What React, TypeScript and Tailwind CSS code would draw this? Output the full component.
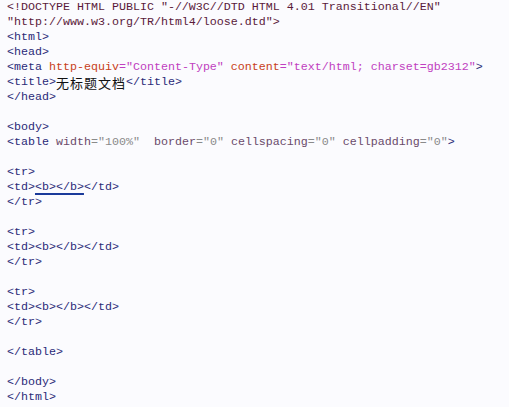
import React from 'react';

// colours picked off the editor screenshot
const TAG = 'text-[#2a2a78]';
const DOC = 'text-[#5a1a3a]';
const ATTR = 'text-[#c8401a]';
const VAL = 'text-[#c040c0]';
const TATTR = 'text-[#6a4a6a]';
const TVAL = 'text-[#8a8a8a]';

const Tag = ({ children }: { children: React.ReactNode }) => <span className={TAG}>{children}</span>;

const TrBlock = ({ underline = false }: { underline?: boolean }) => (
  <>
    <div><Tag>&lt;tr&gt;</Tag></div>
    <div>
      <Tag>&lt;td&gt;</Tag>
      <span className={`${TAG} ${underline ? 'underline decoration-2 decoration-[#1a3a9a] underline-offset-[3px]' : ''}`}>&lt;b&gt;&lt;/b&gt;</span>
      <Tag>&lt;/td&gt;</Tag>
    </div>
    <div><Tag>&lt;/tr&gt;</Tag></div>
  </>
);

const Blank = () => <div>&nbsp;</div>;

export default function App() {
  return (
    <div className="w-[509px] h-[407px] overflow-hidden bg-[#fbfbfe] pl-[7px] pt-0 font-['Liberation_Mono','Courier_New',monospace] text-[11.67px] leading-[15px] whitespace-pre text-[#333]">
      <div className={DOC}>&lt;!DOCTYPE HTML PUBLIC "-//W3C//DTD HTML 4.01 Transitional//EN"</div>
      <div className={DOC}>"http://www.w3.org/TR/html4/loose.dtd"&gt;</div>
      <div><Tag>&lt;html&gt;</Tag></div>
      <div><Tag>&lt;head&gt;</Tag></div>
      <div>
        <Tag>&lt;meta </Tag>
        <span className={ATTR}>http-equiv</span>
        <span className={VAL}>="Content-Type" </span>
        <span className={ATTR}>content</span>
        <span className={VAL}>="text/html; charset=gb2312"</span>
        <Tag>&gt;</Tag>
      </div>
      <div className="flex h-[15px] items-center">
        <Tag>&lt;title&gt;</Tag>
        <span className="text-[#111] text-[13px] tracking-[1px] leading-[15px] font-['Noto_Sans_CJK_SC',sans-serif]">无标题文档</span>
        <Tag>&lt;/title&gt;</Tag>
      </div>
      <div><Tag>&lt;/head&gt;</Tag></div>
      <Blank />
      <div><Tag>&lt;body&gt;</Tag></div>
      <div>
        <Tag>&lt;table </Tag>
        <span className={TATTR}>width</span>
        <span className={TVAL}>="100%"  </span>
        <span className={TATTR}>border</span>
        <span className={TVAL}>="0" </span>
        <span className={TATTR}>cellspacing</span>
        <span className={TVAL}>="0" </span>
        <span className={TATTR}>cellpadding</span>
        <span className={TVAL}>="0"</span>
        <Tag>&gt;</Tag>
      </div>
      <Blank />
      <TrBlock underline />
      <Blank />
      <TrBlock />
      <Blank />
      <TrBlock />
      <Blank />
      <div><Tag>&lt;/table&gt;</Tag></div>
      <Blank />
      <div><Tag>&lt;/body&gt;</Tag></div>
      <div><Tag>&lt;/html&gt;</Tag></div>
    </div>
  );
}
